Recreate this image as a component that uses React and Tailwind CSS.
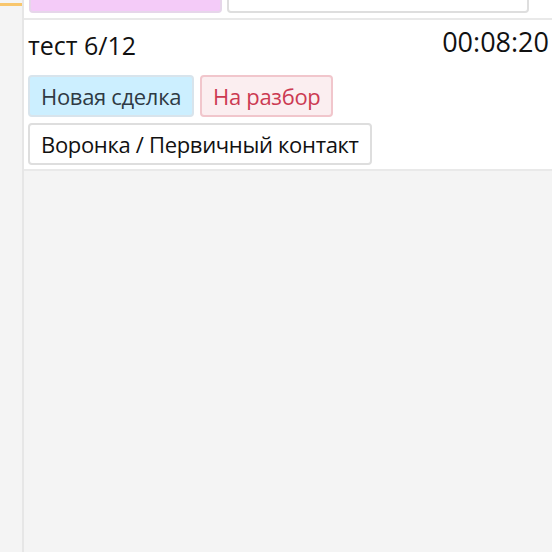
function Badge({ children, tone = "white" }) {
  const tones = {
    blue: "bg-[#ccefff] border-[#d8e4ec] text-[#2f3a44]",
    red: "bg-[#fbeef0] border-[#f1c6cc] text-[#cc3a52]",
    white: "bg-white border-[#dedede] text-[#111]",
  };
  return (
    <span
      className={`inline-flex items-center border-2 rounded-[4px] px-[11px] h-[42px] text-[22px] tracking-[-0.32px] ${tones[tone]}`}
    >
      {children}
    </span>
  );
}

export default function App() {
  return (
    <div className="flex h-screen bg-[#f4f4f4]" style={{ fontFamily: "'Open Sans', sans-serif" }}>
      <div className="w-[22px] shrink-0">
        <div className="mt-[3px] h-[3px] bg-[#f8c66c]" />
      </div>
      <div className="w-[2px] shrink-0 bg-[#e6e6e6]" />

      <div className="flex-1 min-w-0 overflow-hidden">
        {/* previous card, scrolled mostly out of view */}
        <div className="h-[20px] bg-white border-b-2 border-[#e9e9e9] overflow-hidden flex items-end pb-[5px] px-[5px]">
          <div className="flex gap-[5px] shrink-0">
            <span className="block w-[193px] h-[30px] rounded-[4px] border-2 border-[#e6d6ea] bg-[#f4cbf8]" />
            <span className="block w-[302px] h-[30px] rounded-[4px] border-2 border-[#dedede] bg-white" />
          </div>
        </div>

        <div className="bg-white border-b-2 border-[#e9e9e9] pl-[4px] pr-[3px] pb-[4px]">
          <div className="flex justify-between items-start h-[55px]">
            <span className="mt-[8px] text-[25px] leading-[34px] text-[#111]">тест 6/12</span>
            <span className="mt-[3px] text-[27px] leading-[37px] text-[#111]">00:08:20</span>
          </div>
          <div className="flex flex-wrap gap-[6px]">
            <Badge tone="blue">Новая сделка</Badge>
            <Badge tone="red">На разбор</Badge>
          </div>
          <div className="mt-[6px] flex">
            <Badge>Воронка / Первичный контакт</Badge>
          </div>
        </div>
      </div>
    </div>
  );
}
